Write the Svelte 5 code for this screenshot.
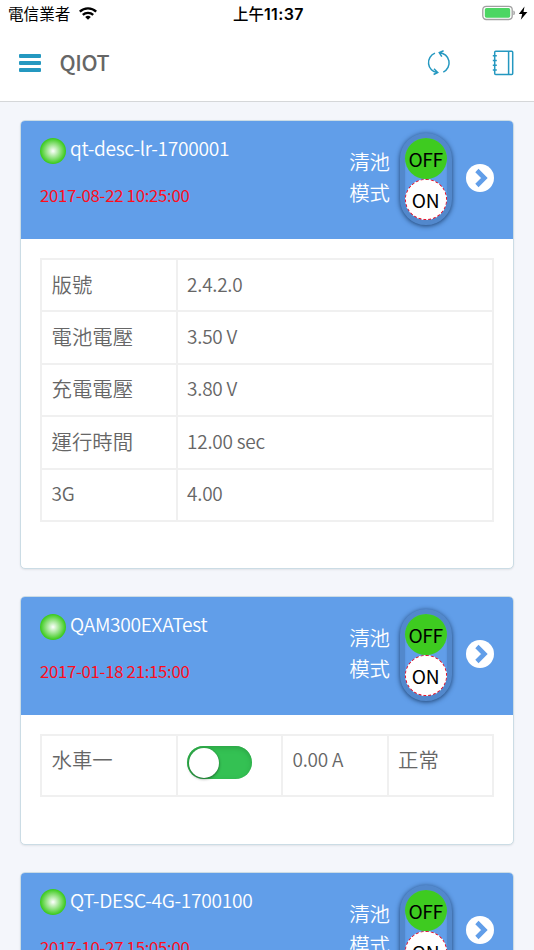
<script lang="ts">
	interface Cell {
		text?: string;
		toggle?: boolean;
	}

	interface Device {
		name: string;
		time: string;
		kind: 'sensor' | 'control';
		rows: Cell[][];
	}

	const devices: Device[] = [
		{
			name: 'qt-desc-lr-1700001',
			time: '2017-08-22 10:25:00',
			kind: 'sensor',
			rows: [
				[{ text: '版號' }, { text: '2.4.2.0' }],
				[{ text: '電池電壓' }, { text: '3.50 V' }],
				[{ text: '充電電壓' }, { text: '3.80 V' }],
				[{ text: '運行時間' }, { text: '12.00 sec' }],
				[{ text: '3G' }, { text: '4.00' }]
			]
		},
		{
			name: 'QAM300EXATest',
			time: '2017-01-18 21:15:00',
			kind: 'control',
			rows: [[{ text: '水車一' }, { toggle: true }, { text: '0.00 A' }, { text: '正常' }]]
		},
		{
			name: 'QT-DESC-4G-1700100',
			time: '2017-10-27 15:05:00',
			kind: 'sensor',
			rows: []
		}
	];

	function isLatin(text = '') {
		return /^[\x20-\x7e]+$/.test(text);
	}
</script>

<div class="screen">
	<div class="status">
		<div class="carrier">
			<span>電信業者</span>
			<svg width="18" height="13" viewBox="0 0 18 13" fill="none" stroke="#000" stroke-width="2.3">
				<path d="M.8 4.7a11.8 11.8 0 0 1 16.4 0" />
				<path d="M3.8 7.9a7.5 7.5 0 0 1 10.4 0" />
				<path d="M9 12.8 6.2 10a4 4 0 0 1 5.6 0z" fill="#000" stroke="none" />
			</svg>
		</div>
		<div class="clock">上午<b>11:37</b></div>
		<div class="power">
			<svg width="46" height="16" viewBox="0 0 46 16">
				<rect x=".8" y="1.3" width="29.4" height="13.2" rx="3.4" fill="#fff" stroke="#a0a0a0" stroke-width="1.3" />
				<rect x="2.8" y="3.1" width="25.4" height="9.7" rx="1.7" fill="#4cd663" />
				<path d="M31.8 5.8q1.6 2 0 4.2z" fill="#999" stroke="#999" stroke-width=".6" />
				<path d="M42.5 1.4 36.8 9h3.4l-1.4 5.8L45.4 7h-3.9z" fill="#000" />
			</svg>
		</div>
	</div>

	<header>
		<button class="menu" aria-label="menu" type="button">
			<i></i><i></i><i></i>
		</button>
		<h1>QIOT</h1>
		<svg class="refresh" width="24" height="26" viewBox="0 0 24 26" fill="none" stroke="#2498c0" stroke-width="1.5">
			<path d="M8 3.1A10.2 10.2 0 0 0 10.3 22.7M7 18.8l3.7 3.7-4.1 2" />
			<path d="M16.3 22.1A10.2 10.2 0 0 0 12.4 2.7M16.6.8l-4.3 1.8 2.5 4" />
		</svg>
		<svg class="book" width="22" height="26" viewBox="0 0 22 26" fill="none" stroke="#2498c0" stroke-width="1.5">
			<rect x="2.7" y="1.2" width="18" height="23.4" rx="1" />
			<path d="M16.6 1.2v23.4M.8 5.8h4M.8 10.6h4M.8 15.3h4M.8 20h4" />
		</svg>
	</header>

	<main>
		{#each devices as device}
			<section class="card {device.kind}">
				<div class="card-head">
					<div class="info">
						<div class="name"><span class="led"></span>{device.name}</div>
						<div class="time">{device.time}</div>
					</div>
					<div class="mode">清池<br />模式</div>
					<div class="switch">
						<span class="off">OFF</span>
						<span class="on">ON</span>
					</div>
					<svg class="go" width="28" height="28" viewBox="0 0 28 28">
						<circle cx="14" cy="14" r="14" fill="#fff" />
						<path d="m10.9 6.5 7.5 7.5-7.5 7.5" fill="none" stroke="#619ee9" stroke-width="4.6" />
					</svg>
				</div>
				<div class="card-body">
					<table>
						<tbody>
							{#each device.rows as row}
								<tr>
									{#each row as cell}
										<td class:latin={isLatin(cell.text)}>
											{#if cell.toggle}
												<span class="toggle"><span class="knob"></span></span>
											{:else}
												{cell.text}
											{/if}
										</td>
									{/each}
								</tr>
							{/each}
						</tbody>
					</table>
				</div>
			</section>
		{/each}
	</main>
</div>

<style>
	:global(body) {
		margin: 0;
	}

	.screen {
		height: 950px;
		overflow: hidden;
		background: #f4f6fb;
		color: #666;
		font-family: 'Noto Sans CJK TC', sans-serif;
		font-size: 20.4px;
	}

	.status {
		display: grid;
		grid-template-columns: 1fr auto 1fr;
		align-items: center;
		height: 26px;
		padding: 0 6px 0 8px;
		background: #fff;
		color: #000;
		font-size: 15.6px;
		line-height: 26px;
	}

	.carrier {
		display: flex;
		align-items: center;
		gap: 9px;
	}

	.carrier span {
		margin-top: -1px;
	}

	.carrier svg {
		margin-top: -1px;
	}

	.clock {
		padding-left: 1px;
		font-size: 15.4px;
		font-weight: 500;
	}

	.clock b {
		font-family: Inter, sans-serif;
		font-size: 16px;
		font-weight: 600;
		letter-spacing: 0.4px;
	}

	.power {
		display: flex;
		justify-content: flex-end;
		margin-top: -1px;
	}

	header {
		display: flex;
		align-items: center;
		box-sizing: border-box;
		height: 76px;
		padding: 0 20.5px 1px 19px;
		background: #fff;
		border-bottom: 1px solid #d5d7d9;
	}

	.menu {
		display: flex;
		flex-direction: column;
		gap: 3px;
		padding: 0;
		border: 0;
		background: none;
	}

	.menu i {
		width: 22px;
		height: 4px;
		border-radius: 1px;
		background: #2498c0;
	}

	h1 {
		margin: -2px auto 0 18.5px;
		font-size: 21.4px;
		font-weight: 500;
		letter-spacing: -0.4px;
		line-height: 30px;
	}

	.refresh {
		margin-right: 41px;
	}

	.refresh,
	.book {
		margin-top: -1px;
	}

	main {
		display: flex;
		flex-direction: column;
		gap: 27px;
		padding: 18px 20px 0;
	}

	.card {
		flex: none;
		box-sizing: border-box;
		height: 449px;
		overflow: hidden;
		border: 1px solid #cbdce5;
		border-radius: 5px;
		background: #fff;
		box-shadow: 0 1px 2px rgba(0, 0, 0, 0.08);
	}

	.card.control {
		height: 248.5px;
	}

	.card-head {
		display: flex;
		align-items: center;
		box-sizing: border-box;
		height: 118px;
		padding: 0 19px 3.5px;
		background: #619ee9;
		color: #fff;
	}

	.info {
		flex: 1;
		align-self: flex-start;
		padding-top: 12.5px;
	}

	.name {
		display: flex;
		align-items: center;
		height: 29px;
		font-size: 19.2px;
		font-weight: 350;
		letter-spacing: -0.3px;
		line-height: 30px;
	}

	.led {
		width: 26px;
		height: 26px;
		margin: 5px 4px 0 0;
		border-radius: 50%;
		background: radial-gradient(circle, #fff 0%, #3ecb20 68%);
	}

	.time {
		margin-top: 19.5px;
		color: #ff0d1c;
		font-size: 16.8px;
		letter-spacing: -0.3px;
		line-height: 26px;
	}

	.mode {
		margin: -2px 9.5px 0 0;
		font-weight: 350;
		line-height: 31px;
	}

	.switch {
		display: flex;
		flex-direction: column;
		margin: 2px 14.5px 0 0;
		border: 5px solid #5288cc;
		border-radius: 26px;
		background: #619ee9;
		box-shadow: 0 1px 5px #1d3f6c, inset 0 0 2px #5288cc;
	}

	.switch span {
		box-sizing: border-box;
		width: 42px;
		height: 41px;
		border-radius: 50%;
		color: #000;
		font-size: 19.2px;
		letter-spacing: -0.4px;
		line-height: 42px;
		text-align: center;
	}

	.switch .off {
		background: #3ecb20;
	}

	.switch .on {
		border: 1.5px dashed #f00f24;
		background: #fff;
		line-height: 40px;
	}

	.card-body {
		padding: 19px 19px 0;
	}

	table {
		width: 100%;
		table-layout: fixed;
		border-collapse: collapse;
	}

	td {
		box-sizing: border-box;
		height: 52.4px;
		padding: 0 10px 3px 9.5px;
		border: 2px solid #f0f0f0;
		font-weight: 350;
		line-height: 30px;
	}

	td.latin {
		font-size: 19px;
		letter-spacing: -0.25px;
	}

	td:first-child {
		width: 30%;
	}

	.control td {
		height: 61px;
		padding-top: 8px;
		vertical-align: top;
	}

	.toggle {
		display: block;
		box-sizing: border-box;
		width: 65px;
		height: 33px;
		margin-top: 2px;
		padding: 1.5px;
		border-radius: 17px;
		background: #34c153;
		box-shadow: inset 0 2px 5px #2ca346;
	}

	.knob {
		display: block;
		width: 30px;
		height: 30px;
		border-radius: 50%;
		background: #fff;
		box-shadow: 0 1px 3px rgba(0, 0, 0, 0.5);
	}
</style>
